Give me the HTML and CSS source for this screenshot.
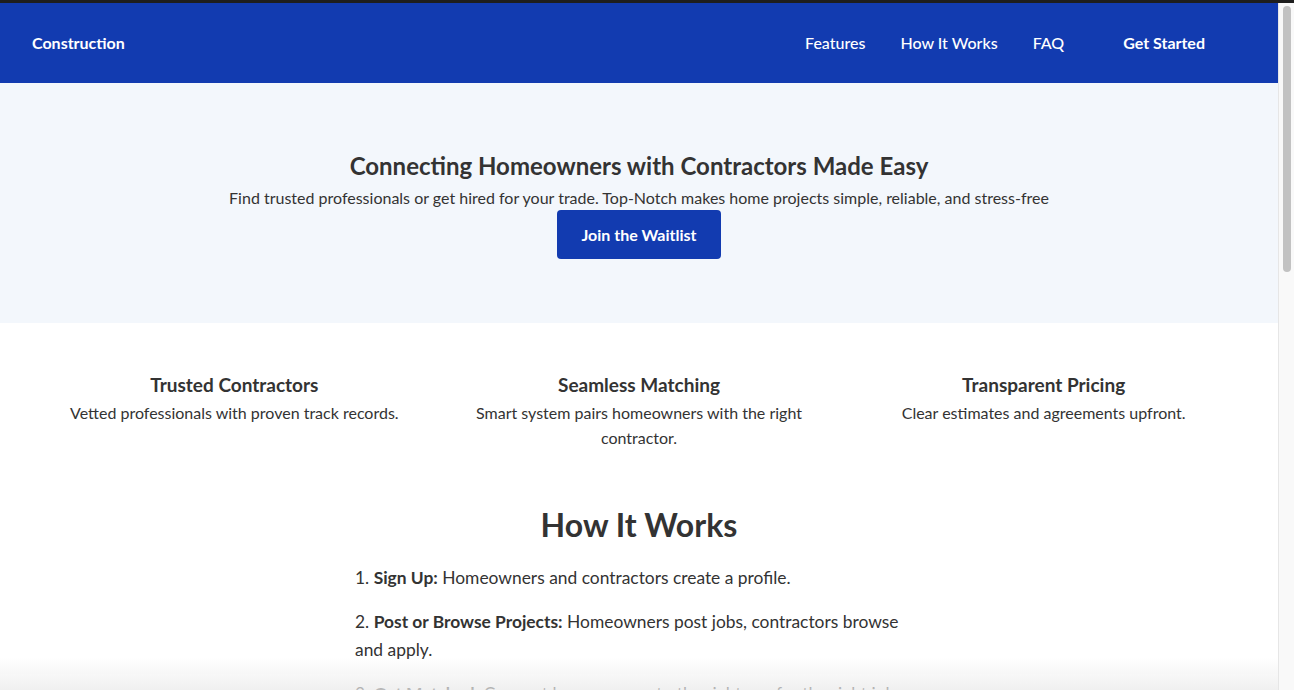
FILE: index.html
```html
<!DOCTYPE html>
<html lang="en">
<head>
<meta charset="utf-8">
<title>Construction</title>
<link rel="stylesheet" href="styles.css">
</head>
<body>
<div class="chrome-bar"></div>
<header class="nav">
  <a class="brand" href="#">Construction</a>
  <nav class="nav-links">
    <a href="#features">Features</a>
    <a href="#how">How It Works</a>
    <a href="#faq">FAQ</a>
    <a class="nav-cta" href="#join">Get Started</a>
  </nav>
</header>

<section class="hero">
  <h1 class="hero-title">Connecting Homeowners with Contractors Made Easy</h1>
  <p class="hero-sub">Find trusted professionals or get hired for your trade. Top-Notch makes home projects simple, reliable, and stress-free</p>
  <a class="btn" href="#join">Join the Waitlist</a>
</section>

<section class="features" id="features">
  <div class="feature">
    <h3>Trusted Contractors</h3>
    <p>Vetted professionals with proven track records.</p>
  </div>
  <div class="feature">
    <h3>Seamless Matching</h3>
    <p>Smart system pairs homeowners with the right contractor.</p>
  </div>
  <div class="feature">
    <h3>Transparent Pricing</h3>
    <p>Clear estimates and agreements upfront.</p>
  </div>
</section>

<section class="how" id="how">
  <h2>How It Works</h2>
  <div class="steps">
    <p>1. <strong>Sign Up:</strong> Homeowners and contractors create a profile.</p>
    <p>2. <strong>Post or Browse Projects:</strong> Homeowners post jobs, contractors browse and apply.</p>
    <p>3. <strong>Get Matched:</strong> Connect homeowners to the right pro for the right job.</p>
    <p>4. <strong>Get It Done:</strong> Complete the project with secure payments and reviews.</p>
  </div>
</section>

<section class="faq" id="faq">
  <h2>Frequently Asked Questions</h2>
  <div class="faq-list">
    <div class="faq-item">
      <h4>Is it free to join?</h4>
      <p>Yes, signing up for the waitlist is completely free for homeowners and contractors.</p>
    </div>
    <div class="faq-item">
      <h4>How are contractors vetted?</h4>
      <p>We verify licenses, insurance, and reviews before any contractor is listed.</p>
    </div>
    <div class="faq-item">
      <h4>When will Top-Notch launch?</h4>
      <p>We are launching soon. Join the waitlist to be the first to know.</p>
    </div>
    <div class="faq-item">
      <h4>Which trades are supported?</h4>
      <p>Plumbing, electrical, roofing, carpentry, painting, landscaping and more.</p>
    </div>
  </div>
</section>

<section class="join" id="join">
  <h2>Join the Waitlist</h2>
  <p>Be the first to know when Top-Notch launches in your area.</p>
  <a class="btn" href="#">Get Started</a>
</section>

<footer class="footer">
  <p>&copy; 2025 Top-Notch Construction. All rights reserved.</p>
</footer>

<div class="fade"></div>
<div class="scrollbar"><div class="scrollbar-thumb"></div></div>
</body>
</html>
```

FILE: styles.css
```css
::-webkit-scrollbar {
  display: none;
}

* {
  box-sizing: border-box;
}

body {
  margin: 0 16px 0 0;
  font-family: "Lato", "Open Sans", sans-serif;
  color: #333;
  background: #fff;
}

.chrome-bar {
  position: fixed;
  top: 0;
  left: 0;
  right: 0;
  height: 3px;
  background: #1e1e1e;
  z-index: 10;
}

.nav {
  margin-top: 3px;
  height: 80px;
  background: #123bb0;
  display: flex;
  align-items: center;
  justify-content: space-between;
  padding: 0 49px 2px 32px;
}

.brand {
  color: #fff;
  text-decoration: none;
  font-weight: 700;
  font-size: 16px;
}

.nav-links {
  display: flex;
  align-items: center;
  gap: 35px;
}

.nav-links a {
  color: #fff;
  text-decoration: none;
  font-size: 16px;
  font-weight: 500;
}

.nav-links .nav-cta {
  font-size: 16px;
  font-weight: 700;
  padding: 12px 24px;
}

.hero {
  height: 240px;
  background: #f3f7fc;
  display: flex;
  flex-direction: column;
  align-items: center;
  justify-content: center;
  text-align: center;
  padding-top: 4px;
}

.hero-title {
  margin: 0;
  font-size: 24px;
  line-height: 30px;
  font-weight: 700;
}

.hero-sub {
  margin: 5px 0 0;
  font-size: 16px;
  line-height: 24px;
}

.btn {
  display: inline-block;
  background: #123bb0;
  color: #fff;
  text-decoration: none;
  font-weight: 700;
  font-size: 16px;
  line-height: 49px;
  padding: 0 24px;
  border-radius: 4px;
}

.features {
  display: grid;
  grid-template-columns: repeat(3, 1fr);
  padding: 50px 32px 0;
  text-align: center;
}

.feature {
  padding: 0 20px;
}

.feature h3 {
  margin: 0;
  font-size: 19px;
  line-height: 24px;
  font-weight: 700;
}

.feature p {
  margin: 3px 0 0;
  font-size: 16px;
  line-height: 25px;
}

.how {
  padding-top: 55px;
}

.how h2,
.faq h2,
.join h2 {
  margin: 0;
  text-align: center;
  font-size: 32px;
  line-height: 40px;
  font-weight: 700;
}

.steps {
  max-width: 600px;
  margin: 19px auto 0;
  padding: 0 16px;
}

.steps p {
  margin: 0 0 16px;
  font-size: 17.4px;
  line-height: 28px;
}

.faq {
  padding: 60px 0 20px;
}

.faq-list {
  max-width: 700px;
  margin: 24px auto 0;
  padding: 0 16px;
  display: flex;
  flex-direction: column;
  gap: 24px;
}

.faq-item h4 {
  margin: 0 0 6px;
  font-size: 19px;
  line-height: 24px;
}

.faq-item p {
  margin: 0;
  font-size: 17.4px;
  line-height: 28px;
}

.join {
  margin-top: 60px;
  background: #f3f7fc;
  padding: 70px 0;
  text-align: center;
}

.join p {
  margin: 8px 0 20px;
  font-size: 16px;
  line-height: 24px;
}

.footer {
  background: #123bb0;
  color: #fff;
  text-align: center;
  padding: 30px 0;
  font-size: 14px;
}

.footer p {
  margin: 0;
}

.fade {
  position: fixed;
  left: 0;
  right: 16px;
  bottom: 0;
  height: 32px;
  background: linear-gradient(to bottom, rgba(235, 235, 235, 0), rgba(235, 235, 235, 0.75));
  pointer-events: none;
}

.scrollbar {
  position: fixed;
  top: 3px;
  right: 0;
  bottom: 0;
  width: 16px;
  background: #f9f9f9;
  border-left: 1px solid #e6e6e6;
  padding: 3px 3px 0 4px;
}

.scrollbar-thumb {
  height: 266px;
  background: #c2c2c2;
  border-radius: 4px;
}
```
